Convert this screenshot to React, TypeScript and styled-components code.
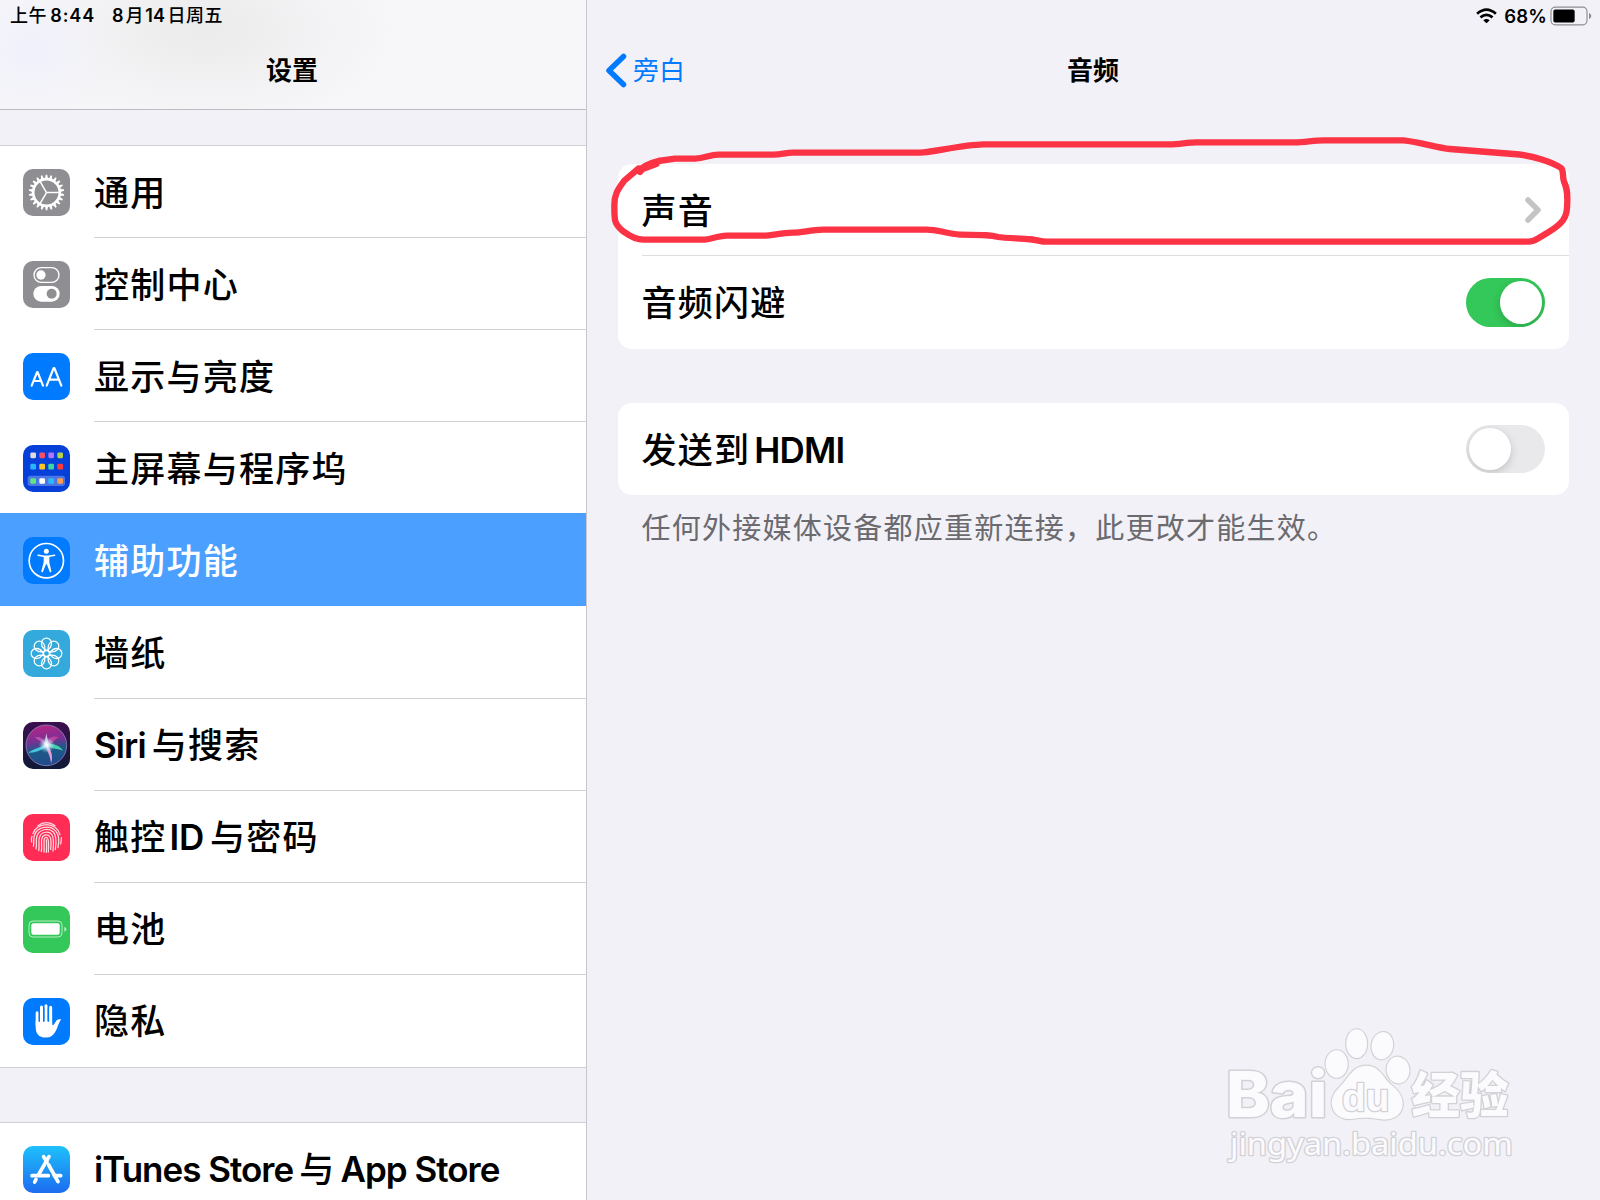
import React from "react";
import styled, { createGlobalStyle } from "styled-components";

const GlobalStyle = createGlobalStyle`
  * { box-sizing: border-box; }
  html, body { margin: 0; padding: 0; }
  body {
    width: 1600px;
    height: 1200px;
    overflow: hidden;
    background: #f2f1f7;
    color: #000;
    font-family: Inter, "Noto Sans CJK SC", sans-serif;
  }
`;

const Screen = styled.div`
  position: relative;
  display: flex;
  width: 1600px;
  height: 1200px;
  overflow: hidden;
  background: #f2f1f7;
`;

const Sidebar = styled.aside`
  display: flex;
  flex-direction: column;
  flex: none;
  width: 587px;
  height: 1200px;
  border-right: 1px solid #c8c8cc;
  overflow: hidden;
`;

const SidebarHeader = styled.header`
  display: flex;
  flex-direction: column;
  flex: none;
  height: 110px;
  border-bottom: 1px solid #bdbdc1;
  background:
    radial-gradient(ellipse 90px 80px at 30px 50px, #f0f0fb 0%, rgba(240, 240, 251, 0) 100%),
    radial-gradient(ellipse 190px 100px at 205px 30px, #ebebec 0%, rgba(235, 235, 236, 0) 100%),
    #f7f7f9;
`;

const StatusLeft = styled.div`
  display: flex;
  align-items: center;
  gap: 17px;
  height: 32px;
  padding-left: 10px;
  font-size: 18px;
  line-height: 32px;
  font-weight: 500;
  letter-spacing: 0.6px;
  white-space: nowrap;
`;

const StatusRight = styled.div`
  display: flex;
  align-items: center;
  justify-content: flex-end;
  height: 32px;
  padding-right: 8px;
  font-size: 18.5px;
  line-height: 30px;
  font-weight: 600;
  letter-spacing: 0.2px;
`;

const Percent = styled.span`
  margin-top: -1px;
`;

const WifiIcon = styled.svg`
  width: 21px;
  height: 15.5px;
  margin-right: 7px;
  margin-top: -1px;
`;

const BatteryIcon = styled.svg`
  width: 42px;
  height: 20px;
  margin-left: 3px;
`;

const Title = styled.h1`
  margin: 0;
  font-size: 26px;
  line-height: 38px;
  font-weight: 700;
  text-align: center;
`;

const SidebarTitle = styled(Title)`
  margin-top: 20px;
  padding-right: 2px;
`;

const SidebarGap = styled.div<{ $height: number }>`
  flex: none;
  height: ${(p) => p.$height}px;
`;

const List = styled.nav`
  flex: none;
  border-top: 1px solid #d0d0d4;
  border-bottom: 1px solid #d0d0d4;
  background: #fff;
`;

const Item = styled.div<{ $selected?: boolean }>`
  display: flex;
  align-items: center;
  height: 92.1px;
  padding-left: 23px;
  background: ${(p) => (p.$selected ? "#4ba0ff" : "#fff")};
  box-shadow: ${(p) => (p.$selected ? "0 -1px 0 #4ba0ff" : "none")};
  color: ${(p) => (p.$selected ? "#fff" : "#000")};
`;

const ItemBody = styled.div<{ $line: boolean }>`
  display: flex;
  align-items: center;
  flex: 1;
  height: 100%;
  margin-left: 24px;
  padding-top: 2px;
  border-bottom: 1px solid ${(p) => (p.$line ? "#d2d2d5" : "transparent")};
`;

const AppIcon = styled.svg`
  flex: none;
  width: 47px;
  height: 47px;
  margin-top: 1px;
  border-radius: 10px;
`;

const Label = styled.span`
  display: flex;
  align-items: baseline;
  font-size: 35px;
  line-height: 50px;
  font-weight: 500;
  white-space: pre;
`;

const Han = styled.span<{ $gap?: number }>`
  letter-spacing: ${(p) => p.$gap ?? 1.25}px;
`;

const Latin = styled.span<{ $space?: number; $before?: number; $after?: number; $weight?: number }>`
  font-weight: ${(p) => p.$weight ?? 600};
  letter-spacing: ${(p) => p.$space ?? 0}px;
  margin-left: ${(p) => p.$before ?? 0}px;
  margin-right: ${(p) => p.$after ?? 0}px;
`;

const Main = styled.main`
  display: flex;
  flex-direction: column;
  flex: 1;
  height: 1200px;
  padding-bottom: 20px;
`;

const NavBar = styled.div`
  display: grid;
  grid-template-columns: 1fr auto 1fr;
  align-items: center;
  height: 38px;
  margin-top: 20px;
  padding-left: 18px;
  padding-right: 19px;
`;

const Back = styled.div`
  display: flex;
  align-items: center;
  gap: 5px;
  color: #007aff;
  font-size: 26px;
  line-height: 38px;
`;

const BackArrow = styled.svg`
  width: 23px;
  height: 35px;
  margin-top: -1px;
`;

const Card = styled.section`
  margin: 0 31px;
  border-radius: 14px;
  background: #fff;
`;

const FirstCard = styled(Card)`
  margin-top: 74px;
`;

const SecondCard = styled(Card)`
  margin-top: 54.5px;
`;

const Setting = styled.div<{ $line?: boolean }>`
  display: flex;
  align-items: center;
  justify-content: space-between;
  height: 92.3px;
  margin-left: 23.5px;
  padding-right: 24px;
  border-bottom: ${(p) => (p.$line ? "1px solid #dededf" : "none")};

  ${Label} {
    margin-top: 2px;
  }
`;

const Chevron = styled.svg`
  width: 18px;
  height: 28px;
  margin-right: 3px;
  margin-top: 1px;
`;

const Toggle = styled.div<{ $on: boolean }>`
  display: flex;
  justify-content: ${(p) => (p.$on ? "flex-end" : "flex-start")};
  width: 79.5px;
  height: 48.5px;
  padding: 3px;
  border-radius: 25px;
  background: ${(p) => (p.$on ? "#34c759" : "#e9e9eb")};
  overflow: hidden;
`;

const Knob = styled.div`
  width: 42.5px;
  height: 42.5px;
  border-radius: 50%;
  background: #fff;
  box-shadow: 0 3px 9px rgba(0, 0, 0, 0.17);
`;

const Footnote = styled.p`
  margin: 13px 0 0 54.5px;
  font-size: 29px;
  line-height: 42px;
  letter-spacing: 1.25px;
  color: #6a6a6f;
  white-space: nowrap;
`;

const Annotation = styled.svg`
  position: absolute;
  left: 590px;
  top: 120px;
  width: 1010px;
  height: 140px;
`;

const Watermark = styled.svg`
  position: absolute;
  left: 1200px;
  top: 1010px;
  width: 340px;
  height: 170px;
`;

const teeth = Array.from({ length: 22 }, (_, i) => (i * 360) / 22 + 8);

const GearIcon = () => (
  <AppIcon viewBox="0 0 141 141">
    <rect width="141" height="141" fill="#8e8e93" />
    <g stroke="#fff" fill="none" transform="translate(70.5 70.5)">
      <circle r="40" strokeWidth="8" />
      {teeth.map((a) => (
        <path key={a} d="M42 -4.5L53 -2.2V2.2L42 4.5Z" fill="#fff" stroke="none" transform={`rotate(${a})`} />
      ))}
      {[0, 120, 240].map((a) => (
        <path key={a} d="M0 0H38" strokeWidth="4.5" transform={`rotate(${a})`} />
      ))}
    </g>
  </AppIcon>
);

const ControlIcon = () => (
  <AppIcon viewBox="0 0 141 141">
    <rect width="141" height="141" fill="#8e8e93" />
    <rect x="33" y="20" width="75" height="44" rx="22" fill="none" stroke="#fff" strokeWidth="4" />
    <circle cx="54" cy="42" r="14" fill="#fff" />
    <rect x="31" y="75" width="79" height="47" rx="23.5" fill="#fff" />
    <circle cx="86" cy="98" r="15" fill="#8e8e93" />
  </AppIcon>
);

const DisplayIcon = () => (
  <AppIcon viewBox="0 0 141 141">
    <rect width="141" height="141" fill="#007aff" />
    <g fill="none" stroke="#fff" strokeWidth="6.5" strokeLinecap="round" strokeLinejoin="round">
      <path d="M26 98L42.500 57H43.500L60 98M32 84H54" />
      <path d="M71 98L92 45H94L115 98M79 80H107" />
    </g>
  </AppIcon>
);

const dots = [
  ["#dcdcde", "#f5506a", "#b074ff", "#b5d34a"],
  ["#27b5ff", "#ffc527", "#3ad7a3", "#ff3b3b"],
  ["#62e67e", "#fff", "#27bdfb", "#ff9d4d"],
];
const dotRows = [31, 65, 108];

const HomeIcon = () => (
  <AppIcon viewBox="0 0 141 141">
    <rect width="141" height="141" fill="#0640d8" />
    <rect x="14" y="92" width="112" height="31" rx="8" fill="#4a76e6" />
    {dots.map((row, r) =>
      row.map((c, i) => (
        <rect key={`${r}-${i}`} x={22 + i * 27} y={dotRows[r] - 8.5} width="17" height="17" rx="4" fill={c} />
      ))
    )}
  </AppIcon>
);

const AccessIcon = () => (
  <AppIcon viewBox="0 0 141 141">
    <rect width="141" height="141" fill="#007aff" />
    <circle cx="70" cy="71" r="51.5" fill="none" stroke="#fff" strokeWidth="5" />
    <circle cx="70" cy="43" r="7.5" fill="#fff" />
    <path
      d="M45 52.5L64 55.5H76L95 52.5Q97 52.5 97 54.5T95 57L79 60V76L85 102Q85.500 105 83 105.500T80 104L71.500 82H69L60 104Q58.500 106 56.500 105.500T55 102L62 76V60L45 57Q43 56.500 43 54.500T45 52.500Z"
      fill="#fff"
    />
  </AppIcon>
);

const WallpaperIcon = () => (
  <AppIcon viewBox="0 0 141 141">
    <rect width="141" height="141" fill="#34aadc" />
    <g transform="translate(70.5 70.5)" fill="none" stroke="#fff" strokeWidth="3.8">
      {[0, 45, 90, 135, 180, 225, 270, 315].map((a) => (
        <path key={a} d="M0 -9C-9 -14 -15 -22 -15 -31A15 15 0 0 1 15 -31C15 -22 9 -14 0 -9Z" transform={`rotate(${a})`} />
      ))}
      <circle r="9" />
    </g>
  </AppIcon>
);

const SiriIcon = () => (
  <AppIcon viewBox="0 0 141 141">
    <defs>
      <linearGradient id="siriBack" x1="0" y1="0" x2="0" y2="1">
        <stop offset="0" stopColor="#3b0f4d" />
        <stop offset="1" stopColor="#101a38" />
      </linearGradient>
      <linearGradient id="siriOrb" x1="0.35" y1="0" x2="0.5" y2="1">
        <stop offset="0" stopColor="#b92486" />
        <stop offset="0.38" stopColor="#7a2f94" />
        <stop offset="0.62" stopColor="#1b5a86" />
        <stop offset="1" stopColor="#23498f" />
      </linearGradient>
      <radialGradient id="siriGlow">
        <stop offset="0" stopColor="#fff" />
        <stop offset="0.35" stopColor="#e6f6ff" stopOpacity="0.75" />
        <stop offset="1" stopColor="#9fe8ff" stopOpacity="0" />
      </radialGradient>
    </defs>
    <rect width="141" height="141" fill="url(#siriBack)" />
    <circle cx="70" cy="70" r="61" fill="url(#siriOrb)" stroke="#8d86b8" strokeWidth="2.5" />
    <path d="M71 70C58 38 40 45 33 46C42 50 52 60 71 70Z" fill="#d96bc0" opacity="0.6" />
    <path d="M71 70C74 44 92 40 108 46C96 50 90 66 71 70Z" fill="#e04c9d" opacity="0.65" />
    <path d="M72 66C90 62 112 72 120 86C106 80 92 82 72 72Z" fill="#4ce3b4" opacity="0.85" />
    <path d="M70 66C54 76 32 80 16 92C34 94 54 86 72 73Z" fill="#4fd8ee" opacity="0.85" />
    <path d="M68 70C72 90 82 100 84 124C92 106 84 84 75 70Z" fill="#f7a5dc" opacity="0.9" />
    <path d="M70 34L77 66L70 76L64 66Z" fill="#fff" opacity="0.7" />
    <circle cx="71" cy="69" r="24" fill="url(#siriGlow)" />
  </AppIcon>
);

const TouchIdIcon = () => (
  <AppIcon viewBox="0 0 141 141">
    <rect width="141" height="141" fill="#ff2d55" />
    <g fill="none" stroke="#ffdbe2" strokeWidth="3.8" strokeLinecap="round">
      <path d="M45 35C60 23 81 23 96 35" />
      <path d="M30 59C33 49 38 44 44 40C60 29 82 30 96 40C104 46 109 54 111 62" />
      <path d="M26 84C24 76 25 72 27 67M115 71C116 77 115 82 113 90" />
      <path d="M31 97C35 84 29 77 35 62C44 37 82 32 99 52C109 63 109 80 105 101" />
      <path d="M39 105C43 90 37 80 42 66C49 46 76 40 91 54C101 64 100 86 97 107" />
      <path d="M47 110C51 93 44 80 50 68C56 53 77 50 86 61C94 70 92 92 90 111" />
      <path d="M55 113C58 96 53 82 57 72C62 60 76 60 81 69C86 77 84 96 83 106" />
      <path d="M63 114C65 97 61 83 64 75C67 68 73 69 75 76C78 85 76 102 76 114" />
      <path d="M70 78C71 90 71 103 70 115" />
    </g>
  </AppIcon>
);

const BatteryAppIcon = () => (
  <AppIcon viewBox="0 0 141 141">
    <rect width="141" height="141" fill="#34c759" />
    <rect x="18" y="45" width="99" height="48" rx="12" fill="none" stroke="#b8edc5" strokeWidth="3" />
    <rect x="25" y="52" width="85" height="34" rx="6" fill="#fff" />
    <path d="M124 62Q130 64 130 69.500T124 77Z" fill="#b8edc5" />
  </AppIcon>
);

const HandIcon = () => (
  <AppIcon viewBox="0 0 141 141">
    <rect width="141" height="141" fill="#007aff" />
    <g fill="none" stroke="#fff" strokeWidth="9" strokeLinecap="round">
      <path d="M42.500 44V80M55.500 27V75M69 23.500V75M83 28V75" />
    </g>
    <path
      d="M38 70H87.500V78Q89 84 92 80L101 67Q106 62 115 64Q110 69 106 80C100 96 94 118 70 118.500C46 119 38 106 38 86Z"
      fill="#fff"
    />
    <path d="M49 42V70M62.300 30V70M76 30V70" stroke="#007aff" strokeWidth="3.800" strokeLinecap="round" />
  </AppIcon>
);

const StoreIcon = () => (
  <AppIcon viewBox="0 0 141 141">
    <defs>
      <linearGradient id="storeBack" x1="0" y1="0" x2="0" y2="1">
        <stop offset="0" stopColor="#1fc0fb" />
        <stop offset="1" stopColor="#1c6cf0" />
      </linearGradient>
    </defs>
    <rect width="141" height="141" fill="url(#storeBack)" />
    <g fill="none" stroke="#fff" strokeWidth="11" strokeLinecap="round">
      <path d="M78 32L46 87M39 100L35 108" />
      <path d="M62 32L72 48M77 57L105 107" />
      <path d="M27 89H76M94 89H113" />
    </g>
  </AppIcon>
);

interface Entry {
  icon: React.ReactNode;
  label: React.ReactNode;
  selected?: boolean;
}

const entries: Entry[] = [
  { icon: <GearIcon />, label: <Han>通用</Han> },
  { icon: <ControlIcon />, label: <Han>控制中心</Han> },
  { icon: <DisplayIcon />, label: <Han>显示与亮度</Han> },
  { icon: <HomeIcon />, label: <Han>主屏幕与程序坞</Han> },
  { icon: <AccessIcon />, label: <Han>辅助功能</Han>, selected: true },
  { icon: <WallpaperIcon />, label: <Han>墙纸</Han> },
  {
    icon: <SiriIcon />,
    label: (
      <>
        <Latin $space={-0.9} $after={6}>Siri</Latin>
        <Han>与搜索</Han>
      </>
    ),
  },
  {
    icon: <TouchIdIcon />,
    label: (
      <>
        <Han>触控</Han>
        <Latin $before={3} $space={-0.3} $after={6}>ID</Latin>
        <Han>与密码</Han>
      </>
    ),
  },
  { icon: <BatteryAppIcon />, label: <Han>电池</Han> },
  { icon: <HandIcon />, label: <Han>隐私</Han> },
];

const SidebarRow = ({ index }: { index: number }) => {
  const e = entries[index];
  return (
    <Item $selected={e.selected}>
      {e.icon}
      <ItemBody $line={!e.selected && !entries[index + 1]?.selected && index < entries.length - 1}>
        <Label>{e.label}</Label>
      </ItemBody>
    </Item>
  );
};

export default function App() {
  return (
    <>
      <GlobalStyle />
      <Screen>
        <Sidebar>
          <SidebarHeader>
            <StatusLeft>
              <span>
                上午<Latin $before={3} $space={0.9}>8:44</Latin>
              </span>
              <span>
                <Latin $after={2}>8</Latin>月<Latin $before={1} $space={0.3} $after={2}>14</Latin>日周五
              </span>
            </StatusLeft>
            <SidebarTitle>设置</SidebarTitle>
          </SidebarHeader>
          <SidebarGap $height={35} />
          <List>
            {entries.map((_, i) => (
              <SidebarRow key={i} index={i} />
            ))}
          </List>
          <SidebarGap $height={54} />
          <List>
            <Item>
              <StoreIcon />
              <ItemBody $line={false}>
                <Label>
                  <Latin $space={-1} $after={6}>iTunes Store</Latin>
                  <Han>与</Han>
                  <Latin $space={-1} $before={5}>App Store</Latin>
                </Label>
              </ItemBody>
            </Item>
          </List>
        </Sidebar>
        <Main>
          <StatusRight>
            <WifiIcon viewBox="0 0 66 48">
              <path d="M33 48L23 38Q33 30 43 38Z" fill="#000" />
              <path d="M14 29Q33 13 52 29M3.500 18Q33 -8 62.500 18" fill="none" stroke="#000" strokeWidth="8.500" />
            </WifiIcon>
            <Percent>68%</Percent>
            <BatteryIcon viewBox="0 0 126 60">
              <rect x="3" y="3.500" width="108" height="53" rx="13" fill="none" stroke="#8e8d92" strokeWidth="3.500" />
              <rect x="10" y="10.500" width="64" height="39" rx="6" fill="#000" />
              <path d="M117 21Q124 24 124 30T117 39Z" fill="#8e8d92" />
            </BatteryIcon>
          </StatusRight>
          <NavBar>
            <Back>
              <BackArrow viewBox="0 0 23 35">
                <path d="M18.500 3.500L4 17.500L18.500 31.500" fill="none" stroke="#007aff" strokeWidth="5.500" strokeLinecap="round" strokeLinejoin="round" />
              </BackArrow>
              旁白
            </Back>
            <Title>音频</Title>
          </NavBar>
          <FirstCard>
            <Setting $line>
              <Label>
                <Han>声音</Han>
              </Label>
              <Chevron viewBox="0 0 18 28">
                <path d="M4 4L14 14L4 24" fill="none" stroke="#c4c4c6" strokeWidth="5.500" strokeLinecap="round" strokeLinejoin="round" />
              </Chevron>
            </Setting>
            <Setting>
              <Label>
                <Han>音频闪避</Han>
              </Label>
              <Toggle $on>
                <Knob />
              </Toggle>
            </Setting>
          </FirstCard>
          <SecondCard>
            <Setting>
              <Label>
                <Han>发送到</Han>
                <Latin $before={4} $space={-0.8}>HDMI</Latin>
              </Label>
              <Toggle $on={false}>
                <Knob />
              </Toggle>
            </Setting>
          </SecondCard>
          <Footnote>任何外接媒体设备都应重新连接，此更改才能生效。</Footnote>
        </Main>
        <Annotation viewBox="0 0 3030 420">
          <path
            d="M150 156L158 147L200 131M145 153C155 143 180 128 205 123L255 116H315C345 114 360 104 385 104H550C575 104 585 98 610 98H990C1030 96 1120 74 1180 73H1740C1770 73 1790 67 1820 67H2115C2145 67 2170 61 2200 61H2440C2490 66 2540 83 2580 87L2770 102C2830 106 2890 128 2913 144C2922 151 2916 165 2922 185C2931 205 2932 215 2932 240C2931 265 2932 285 2918 302C2900 326 2875 335 2855 349C2842 356 2835 365 2815 365H1370C1350 365 1340 358 1310 357C1280 355 1240 354 1225 351C1200 345 1190 345 1110 344C1070 340 1040 329 1010 329H700C660 329 640 338 610 338C570 338 550 347 520 347H410C380 348 360 359 340 359H160C130 359 112 342 97 332C72 310 73 300 73 255C73 225 82 210 103 182L145 146"
            fill="none"
            stroke="#fb3345"
            strokeWidth="19"
            strokeLinecap="round"
            strokeLinejoin="round"
          />
        </Annotation>
        <Watermark viewBox="0 0 1020 510">
          <g fill="#fbfbfe" stroke="#d2d1d6" strokeWidth="7" paintOrder="stroke" strokeLinejoin="round">
            <text x="78" y="322" fontFamily="Inter" fontWeight="800" fontSize="190" textLength="304" lengthAdjust="spacingAndGlyphs" strokeWidth="9">Bai</text>
            <ellipse cx="410" cy="162" rx="33" ry="41" />
            <ellipse cx="470" cy="101" rx="31" ry="43" />
            <ellipse cx="547" cy="107" rx="32" ry="41" transform="rotate(10 547 107)" />
            <ellipse cx="594" cy="180" rx="34" ry="40" transform="rotate(-8 594 180)" />
            <path d="M500 167C540 167 550 205 575 226C600 246 612 265 607 292C601 320 572 332 545 328C515 322 485 322 460 326C425 332 396 312 395 278C395 248 420 233 437 210C455 185 470 167 500 167Z" />
            <text x="426" y="302" fontFamily="Liberation Sans" fontWeight="700" fontSize="118" textLength="142" lengthAdjust="spacingAndGlyphs" strokeWidth="8">du</text>
            <text x="634" y="310" fontFamily="Noto Sans CJK SC" fontWeight="900" fontSize="146" textLength="292" lengthAdjust="spacingAndGlyphs" strokeWidth="8">经验</text>
            <text x="90" y="436" fontFamily="Noto Sans" fontWeight="400" fontSize="94" textLength="848" lengthAdjust="spacingAndGlyphs" strokeWidth="8">jingyan.baidu.com</text>
          </g>
        </Watermark>
      </Screen>
    </>
  );
}
